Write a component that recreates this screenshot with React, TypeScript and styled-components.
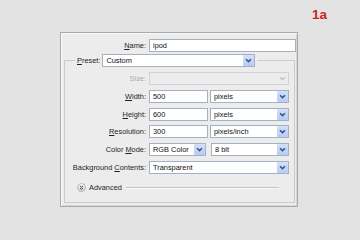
import React from 'react';
import styled, { createGlobalStyle } from 'styled-components';

const Global = createGlobalStyle`
  html, body { margin: 0; padding: 0; background: #e3e3e3; }
  body { font-family: "Liberation Sans", Arial, sans-serif; }
`;

const Page = styled.div`
  width: 360px;
  height: 240px;
  display: flex;
  flex-direction: column;
  background: #e3e3e3;
  overflow: hidden;
`;

const Header = styled.div`
  height: 32px;
  display: flex;
  justify-content: flex-end;
  align-items: flex-start;
  padding-right: 33px;
  box-sizing: border-box;
`;

const Tag = styled.span`
  margin-top: 7px;
  font: bold 13.5px/16px "Liberation Sans", Arial, sans-serif;
  color: #cc2229;
`;

const Dialog = styled.div`
  margin-left: 60px;
  width: 238px;
  height: 175px;
  box-sizing: border-box;
  border: 1px solid #a9a9a9;
  background: #ececec;
  box-shadow: inset 1px 1px 0 #fafafa, inset -1px -1px 0 #d6d6d6;
  padding: 6px 1px 3px 3px;
  display: flex;
  flex-direction: column;
`;

const Row = styled.div`
  display: grid;
  grid-template-columns: ${(p: { $label: number }) => p.$label}px 1fr;
  column-gap: 3px;
  align-items: center;
  height: 13px;
`;

const Label = styled.span<{ $disabled?: boolean }>`
  text-align: right;
  font-size: 7.4px;
  line-height: 13px;
  white-space: nowrap;
  color: ${(p) => (p.$disabled ? '#a8a8a8' : '#1e1e1e')};
  u { text-decoration-thickness: 1px; text-underline-offset: 1px; }
`;

const Field = styled.div<{ $w?: number }>`
  ${(p) => (p.$w ? `width: ${p.$w}px; flex: none;` : 'flex: 1;')}
  height: 13px;
  box-sizing: border-box;
  border: 1px solid #a3b1c2;
  background: #fff;
  padding-left: 3px;
  font-size: 7.4px;
  line-height: 11px;
  color: #111;
  white-space: nowrap;
  overflow: hidden;
`;

const SelectBox = styled.div<{ $w?: number; $disabled?: boolean }>`
  ${(p) => (p.$w ? `width: ${p.$w}px; flex: none;` : 'flex: 1;')}
  height: 13px;
  box-sizing: border-box;
  border: 1px solid ${(p) => (p.$disabled ? '#d2d2d2' : '#a3b1c2')};
  background: ${(p) => (p.$disabled ? '#ececec' : '#fff')};
  display: flex;
  align-items: stretch;
  font-size: 7.4px;
  line-height: 11px;
  color: #111;
`;

const SelectText = styled.span`
  flex: 1;
  padding-left: 3px;
  white-space: nowrap;
  overflow: hidden;
`;

const ArrowBtn = styled.span<{ $disabled?: boolean }>`
  width: 11px;
  flex: none;
  display: flex;
  align-items: center;
  justify-content: center;
  background: ${(p) =>
    p.$disabled ? 'transparent' : 'linear-gradient(#d3e0fb, #b6cbf5)'};
  border-radius: 1px;
`;

const Controls = styled.div`
  display: flex;
  column-gap: ${(p: { $gap?: number }) => p.$gap ?? 2}px;
  height: 13px;
`;

const Group = styled.fieldset`
  margin: 2px 1px 0 0;
  padding: 5px 5px 0 0;
  border: 1px solid #cbcbcb;
  flex: 1;
  min-width: 0;
  display: flex;
  flex-direction: column;
`;

const Legend = styled.legend`
  margin-left: 10px;
  padding: 0 2px;
  display: flex;
  align-items: center;
  column-gap: 2px;
  height: 13px;
`;

const Rows = styled.div`
  display: flex;
  flex-direction: column;
  row-gap: 4.8px;
`;

const Advanced = styled.div`
  margin-top: 7.5px;
  height: 13px;
  display: flex;
  align-items: center;
  padding-left: 12px;
  padding-right: 10px;
  column-gap: 3px;
`;

const AdvText = styled.span`
  font-size: 7.4px;
  color: #1e1e1e;
  white-space: nowrap;
`;

const Rule = styled.span`
  flex: 1;
  height: 0;
  border-top: 1px solid #c4c4c4;
  border-bottom: 1px solid #fbfbfb;
  margin-left: 1px;
`;

const Chevron = ({ disabled }: { disabled?: boolean }) => (
  <svg width="7" height="5" viewBox="0 0 7 5">
    <path
      d="M1 1.2 L3.5 3.6 L6 1.2"
      fill="none"
      stroke={disabled ? '#c4c4c4' : '#3d5382'}
      strokeWidth="1.5"
    />
  </svg>
);

const Select = ({ text, w, disabled }: { text?: string; w?: number; disabled?: boolean }) => (
  <SelectBox $w={w} $disabled={disabled}>
    <SelectText>{text}</SelectText>
    <ArrowBtn $disabled={disabled}>
      <Chevron disabled={disabled} />
    </ArrowBtn>
  </SelectBox>
);

const AdvIcon = () => (
  <svg width="9" height="9" viewBox="0 0 9 9">
    <defs>
      <linearGradient id="ag" x1="0" y1="0" x2="0" y2="1">
        <stop offset="0" stopColor="#ffffff" />
        <stop offset="1" stopColor="#d2d2d2" />
      </linearGradient>
    </defs>
    <circle cx="4.5" cy="4.5" r="4" fill="url(#ag)" stroke="#a8a8a8" strokeWidth="0.8" />
    <path d="M2.9 2.8 L4.5 4.2 L6.1 2.8 M2.9 4.9 L4.5 6.3 L6.1 4.9" fill="none" stroke="#333" strokeWidth="0.9" />
  </svg>
);

export default function App() {
  return (
    <Page>
      <Global />
      <Header>
        <Tag>1a</Tag>
      </Header>
      <Dialog>
        <Row $label={82}>
          <Label>
            <u>N</u>ame:
          </Label>
          <Field>ipod</Field>
        </Row>
        <Group>
          <Legend>
            <Label>
              <u>P</u>reset:
            </Label>
            <Select text="Custom" w={153} />
          </Legend>
          <Rows>
            <Row $label={81}>
              <Label $disabled>Size:</Label>
              <Controls>
                <Select disabled />
              </Controls>
            </Row>
            <Row $label={81}>
              <Label>
                <u>W</u>idth:
              </Label>
              <Controls>
                <Field $w={59}>500</Field>
                <Select text="pixels" />
              </Controls>
            </Row>
            <Row $label={81}>
              <Label>
                <u>H</u>eight:
              </Label>
              <Controls>
                <Field $w={59}>600</Field>
                <Select text="pixels" />
              </Controls>
            </Row>
            <Row $label={81}>
              <Label>
                <u>R</u>esolution:
              </Label>
              <Controls>
                <Field $w={59}>300</Field>
                <Select text="pixels/inch" />
              </Controls>
            </Row>
            <Row $label={81}>
              <Label>
                Color <u>M</u>ode:
              </Label>
              <Controls $gap={5}>
                <Select text="RGB Color" w={57} />
                <Select text="8 bit" />
              </Controls>
            </Row>
            <Row $label={81}>
              <Label>
                Background <u>C</u>ontents:
              </Label>
              <Controls>
                <Select text="Transparent" />
              </Controls>
            </Row>
          </Rows>
          <Advanced>
            <AdvIcon />
            <AdvText>Advanced</AdvText>
            <Rule />
          </Advanced>
        </Group>
      </Dialog>
    </Page>
  );
}
